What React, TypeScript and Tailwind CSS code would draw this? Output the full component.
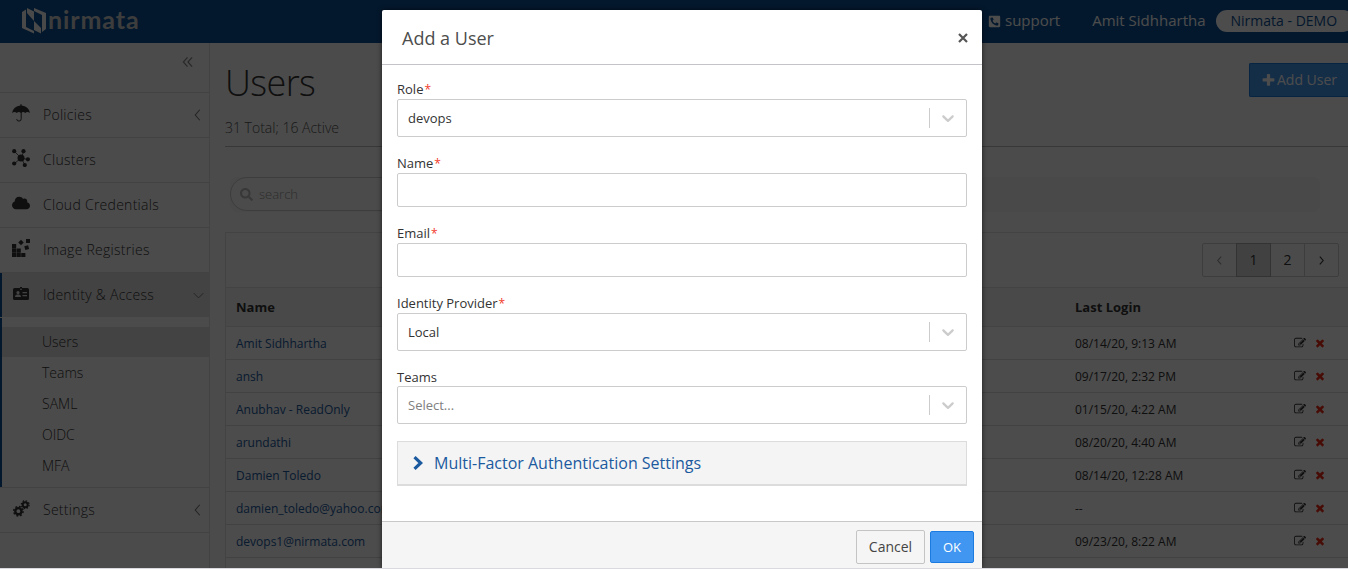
import React from "react";
import { FaPhoneSquare, FaCloud, FaSearch } from "react-icons/fa";

const EDIT =
  "M888 1184l116-116-152-152-116 116v56h96v96h56zm440-720q-16-16-33 1l-350 350q-17 17-1 33t33-1l350-350q17-17 1-33zm80 594v190q0 119-84.5 203.5t-203.5 84.5h-832q-119 0-203.5-84.5t-84.5-203.5v-832q0-119 84.5-203.5t203.5-84.5h832q63 0 117 25 15 7 18 23 3 17-9 29l-49 49q-14 14-32 8-23-6-45-6h-832q-66 0-113 47t-47 113v832q0 66 47 113t113 47h832q66 0 113-47t47-113v-126q0-13 9-22l64-64q15-15 35-7t20 29zm-96-738l288 288-672 672h-288v-288zm444 132l-92 92-288-288 92-92q28-28 68-28t68 28l152 152q28 28 28 68t-28 68z";
const TIMES =
  "M1490 1322q0 40-28 68l-136 136q-28 28-68 28t-68-28l-294-294-294 294q-28 28-68 28t-68-28l-136-136q-28-28-28-68t28-68l294-294-294-294q-28-28-28-68t28-68l136-136q28-28 68-28t68 28l294 294 294-294q28-28 68-28t68 28l136 136q28 28 28 68t-28 68l-294 294 294 294q28 28 28 68z";
const PLUS =
  "M1600 736v192q0 40-28 68t-68 28h-416v416q0 40-28 68t-68 28h-192q-40 0-68-28t-28-68v-416h-416q-40 0-68-28t-28-68v-192q0-40 28-68t68-28h416v-416q0-40 28-68t68-28h192q40 0 68 28t28 68v416h416q40 0 68 28t28 68z";

function Glyph({ d, className }: { d: string; className: string }) {
  return (
    <svg viewBox="0 0 1792 1792" className={className} fill="currentColor">
      <path d={d} />
    </svg>
  );
}

function LogoMark() {
  return (
    <svg viewBox="0 0 24 26" className="h-[26px] w-6 shrink-0" fill="#f4f4f4">
      <path d="M0 4 4 1.5V19L12 23V25.5L0 20Z" />
      <path d="M5 0 12 3.5V13L5 5Z" />
      <path d="M12 0 24 5V21L20 24V7L12 3Z" />
      <path d="M12 13 19 20V25.5L12 22Z" />
    </svg>
  );
}

function UmbrellaIcon() {
  return (
    <svg viewBox="0 0 18 18" className="size-[18px]" fill="currentColor">
      <path d="M9 0q.6 0 .6.600V1.500Q16.500 2 18 9q-2.700-2-4.800 0Q11.200 7 9 9 6.800 7 4.800 9 2.700 7 0 9 1.500 2 8.400 1.500V.6Q8.400 0 9 0Z" />
      <path d="M9.200 8v6.800q0 2.300-2.200 2.300t-2.300-2" fill="none" stroke="currentColor" />
    </svg>
  );
}

function ClusterIcon() {
  return (
    <svg viewBox="0 0 18 18" className="size-[18px]" fill="currentColor" stroke="currentColor">
      <path d="M2 2 9 9 12 2M2 15 9 9 13 16M9 9 16 10.500" strokeWidth="0.800" fill="none" />
      <g stroke="none">
        <circle cx="9" cy="9" r="3.500" />
        <circle cx="2.200" cy="2.200" r="2.100" />
        <circle cx="11.500" cy="2.200" r="2.100" />
        <circle cx="2.200" cy="14.500" r="2.100" />
        <circle cx="12.800" cy="16" r="2.100" />
        <circle cx="15.900" cy="10.300" r="2.100" />
      </g>
    </svg>
  );
}

function RegistryIcon() {
  return (
    <svg viewBox="0 0 18 18" className="size-[18px]" fill="currentColor">
      <path d="M0 5h4.200v4.200H0zM0 9.500h4.200v4.200H0zM0 14h4.200v4H0zM4.600 9.500h4.200v4.200H4.600zM4.600 14h4.200v4H4.600zM9.200 14h4.200v4H9.200zM14 0h4v4h-4zM9 .8l2.700 2.700L9 6.200 6.300 3.500zM12.300 7.300l3.800-1 1 3.700-3.800 1z" />
    </svg>
  );
}

function IdentityIcon() {
  return (
    <svg viewBox="0 0 16 13" className="h-[13px] w-4" fill="currentColor">
      <path
        fillRule="evenodd"
        d="M1.500 1H7V0h2v1h5.500Q16 1 16 2.500v9Q16 13 14.500 13h-13Q0 13 0 11.500v-9Q0 1 1.500 1ZM7 1.800v1h2v-1ZM5 4a1.600 1.600 0 1 0 .01 0ZM2 10h6q0-2.500-2-2.500H4Q2 7.500 2 10ZM9.500 5v1.200H14V5ZM9.500 8v1.200H14V8Z"
      />
    </svg>
  );
}

function GearsIcon() {
  return (
    <svg viewBox="0 0 17 17" className="size-[17px]" fill="none" stroke="currentColor">
      <circle cx="5.400" cy="11.200" r="3.100" strokeWidth="2.400" />
      <circle cx="5.400" cy="11.200" r="4.700" strokeWidth="1.500" strokeDasharray="1.900 1.790" />
      <circle cx="12.200" cy="4.700" r="2.500" strokeWidth="2" />
      <circle cx="12.200" cy="4.700" r="3.900" strokeWidth="1.300" strokeDasharray="1.500 1.560" />
    </svg>
  );
}

function Chevron({ dir, className }: { dir: "left" | "right" | "down"; className: string }) {
  const points = { left: "9,1 3,8 9,15", right: "3,1 9,8 3,15", down: "1,3 8,10 15,3" }[dir];
  return (
    <svg viewBox={dir === "down" ? "0 0 16 13" : "0 0 12 16"} className={className} fill="none" stroke="currentColor">
      <polyline points={points} />
    </svg>
  );
}

function NavItem({ icon, label, arrow }: { icon: React.ReactNode; label: string; arrow?: boolean }) {
  return (
    <div className="flex h-[45px] items-center border-b border-[#dcdcdc] pl-3 text-[#333]">
      <span className="-mt-1 flex w-[18px] justify-center">{icon}</span>
      <span className="ml-[13px] flex-1 tracking-[0.27px]">{label}</span>
      {arrow && <Chevron dir="left" className="mr-[7px] h-3 w-[9px] stroke-[1.4] text-[#777]" />}
    </div>
  );
}

const users = [
  ["Amit Sidhhartha", "08/14/20, 9:13 AM"],
  ["ansh", "09/17/20, 2:32 PM"],
  ["Anubhav - ReadOnly", "01/15/20, 4:22 AM"],
  ["arundathi", "08/20/20, 4:40 AM"],
  ["Damien Toledo", "08/14/20, 12:28 AM"],
  ["damien_toledo@yahoo.com", "--"],
  ["devops1@nirmata.com", "09/23/20, 8:22 AM"],
];

function Label({ text, required }: { text: string; required?: boolean }) {
  return (
    <div className="h-5 text-[13px] leading-5 text-[#333]">
      {text}
      {required && <span className="ml-px text-xs text-[#f23a2b]">*</span>}
    </div>
  );
}

function Select({ value, placeholder }: { value: string; placeholder?: boolean }) {
  return (
    <div className="flex h-[38px] items-center rounded-[2px] border border-[#ccc] pl-[10px] text-[13px]">
      <span className={placeholder ? "flex-1 text-[#808080]" : "flex-1 text-[#333]"}>{value}</span>
      <span className="h-5 w-px bg-[#ccc]" />
      <span className="flex w-9 justify-center">
        <svg viewBox="0 0 20 20" className="size-5 fill-[#ccc]">
          <path d="M4.516 7.548c0.436-0.446 1.043-0.481 1.576 0l3.908 3.747 3.908-3.747c0.533-0.481 1.141-0.446 1.574 0 0.436 0.445 0.408 1.197 0 1.615-0.406 0.418-4.695 4.502-4.695 4.502-0.217 0.223-0.502 0.335-0.787 0.335s-0.570-0.112-0.789-0.335c0 0-4.287-4.084-4.695-4.502s-0.436-1.170 0-1.615z" />
        </svg>
      </span>
    </div>
  );
}

function Input() {
  return <input className="block h-[34px] w-full rounded-[2px] border border-[#ccc] outline-none" />;
}

export default function App() {
  return (
    <div className="relative h-[570px] w-[1348px] overflow-hidden bg-[#fafafa] font-['Open_Sans',sans-serif] text-sm text-[#333]">
      <header className="flex h-[43px] items-center bg-[#0e5196] pb-px text-white">
        <div className="ml-[22px] flex w-[964px] shrink-0 items-center gap-[2px]">
          <LogoMark />
          <span className="-mt-[3px] font-[Lato] text-[25px] leading-none font-bold tracking-[0.9px] text-[#ccc]">nirmata</span>
        </div>
        <FaPhoneSquare className="ml-[2px] size-[13px] shrink-0 -scale-x-100" />
        <span className="ml-1 text-[15px]">support</span>
        <span className="ml-8 text-[15px] whitespace-nowrap">Amit Sidhhartha</span>
        <span className="ml-[10px] flex h-[22px] w-[138px] shrink-0 items-center rounded-full bg-white pl-[15px] text-sm text-[#0e5196]">Nirmata - DEMO</span>
      </header>

      <div className="flex h-[527px]">
        <nav className="w-[210px] shrink-0 border-r border-[#e2e2e2] font-light">
          <div className="flex h-[50px] justify-end border-b border-[#dcdcdc] pt-[13px] pr-[16px] text-[#888]">
            <svg viewBox="0 0 12 12" className="h-3 w-[11px]" fill="none" stroke="currentColor" strokeWidth="1.300">
              <path d="M6 1 1.500 6 6 11M11 1 6.500 6l4.500 5" />
            </svg>
          </div>
          <NavItem icon={<UmbrellaIcon />} label="Policies" arrow />
          <NavItem icon={<ClusterIcon />} label="Clusters" />
          <NavItem icon={<FaCloud className="size-[18px]" />} label="Cloud Credentials" />
          <NavItem icon={<RegistryIcon />} label="Image Registries" />
          <div className="border-b border-[#dcdcdc]">
            <div className="border-l-2 border-[#0e5196]">
              <div className="flex h-11 items-center bg-[#e0e0e0] pl-[11px]">
                <span className="-mt-1">
                  <IdentityIcon />
                </span>
                <span className="ml-[14px] flex-1 tracking-[0.27px]">Identity &amp; Access</span>
                <Chevron dir="down" className="mr-[5px] h-[9px] w-[11px] stroke-[1.4] text-[#777]" />
              </div>
            </div>
            <div className="mt-px border-l-2 border-[#0e5196] pt-[9px] pb-[6px]">
              {["Users", "Teams", "SAML", "OIDC", "MFA"].map((s, i) => (
                <div key={s} className={i === 0 ? "h-[30px] bg-[#e0e0e0] pl-10 leading-[30px]" : "h-[31px] pl-10 leading-[31px]"}>
                  {s}
                </div>
              ))}
            </div>
          </div>
          <NavItem icon={<GearsIcon />} label="Settings" arrow />
        </nav>

        <main className="w-[1138px] pl-[15px]">
          <div className="flex h-[104px] justify-between border-b border-[#bbb]">
            <div>
              <h1 className="mt-[15px] text-[36px] leading-[50px] font-light tracking-[-0.6px]">Users</h1>
              <p className="mt-[10px] text-sm leading-5 font-light text-[#555]">31 Total; 16 Active</p>
            </div>
            <button className="mt-5 flex h-[34px] w-[99px] items-center rounded-l-[2px] border border-r-0 border-[#1b7be0] bg-[#4499f0] pl-[11px] text-sm whitespace-nowrap text-white">
              <Glyph d={PLUS} className="mr-px size-[15px]" />
              Add User
            </button>
          </div>
          <div className="mt-[30px] ml-[5px] h-[35px] w-[1090px] rounded-[8px] bg-[#f3f3f3]">
            <div className="flex h-[34px] w-[400px] items-center rounded-full border border-[#ccc] bg-[#fafafa] pl-[9px] text-[13px] font-light text-[#999]">
              <FaSearch className="mr-[6px] size-[13px] text-[#bbb]" />
              search
            </div>
          </div>

          <section className="mt-5 w-[1140px] border-t border-l border-[#e0e0e0]">
            <div className="flex h-[54px] justify-end pt-[10px] pr-[26px]">
              <div className="flex h-[34px] w-[137px] rounded-[2px] border border-[#ccc]">
                <span className="flex w-[33px] items-center justify-center text-[#999]">
                  <Chevron dir="left" className="h-[9px] w-[7px] stroke-2" />
                </span>
                <span className="-my-px flex w-[35px] items-center justify-center border border-[#aaa] bg-[#dadada]">1</span>
                <span className="flex w-[33px] items-center justify-center">2</span>
                <span className="flex flex-1 items-center justify-center border-l border-[#ccc]">
                  <Chevron dir="right" className="h-[9px] w-[7px] stroke-2" />
                </span>
              </div>
            </div>
            <div className="flex h-10 items-center border-y border-[#e0e0e0] bg-[#f6f6f6] pl-[10px] text-[13px] font-bold">
              <span className="w-[839px]">Name</span>
              <span>Last Login</span>
            </div>
            {users.map(([name, time]) => (
              <div key={name} className="flex h-[33px] items-center border-b border-[#dcdcdc] bg-[#fdfdfd] pl-[10px] text-xs">
                <span className="w-[839px] pt-[2px] text-[#1b5a9f]">{name}</span>
                <span className="w-[219px] pt-[2px]">{time}</span>
                <Glyph d={EDIT} className="size-3" />
                <Glyph d={TIMES} className="ml-2 size-3 text-[#f02b18]" />
              </div>
            ))}
            <div className="h-[33px] bg-[#fdfdfd]" />
          </section>
        </main>
      </div>

      <div className="absolute inset-0 bg-black/70" />

      <div className="absolute top-[10px] left-[382px] flex h-[558px] w-[600px] flex-col rounded-t-[2px] bg-white shadow-[0_0_5px_rgba(0,0,0,0.6)]">
        <div className="flex h-[55px] items-center justify-between border-b border-[#c4c4c8] pt-[2px] pr-3 pl-5">
          <h2 className="text-lg text-[#4d4d4d]">Add a User</h2>
          <svg viewBox="0 0 14 14" className="size-[14px] text-[#555]" fill="none" stroke="currentColor" strokeWidth="2.200">
            <path d="M3 3 11 11M11 3 3 11" />
          </svg>
        </div>
        <div className="flex h-[456px] flex-col px-[15px] pt-[14px]">
          <Label text="Role" required />
          <Select value="devops" />
          <div className="mt-4">
            <Label text="Name" required />
            <Input />
          </div>
          <div className="mt-4">
            <Label text="Email" required />
            <Input />
          </div>
          <div className="mt-4">
            <Label text="Identity Provider" required />
            <Select value="Local" />
          </div>
          <div className="mt-4">
            <Label text="Teams" />
            <div className="-mt-px">
              <Select value="Select..." placeholder />
            </div>
          </div>
          <div className="mt-[17px] flex h-[45px] items-center border border-b-2 border-[#dcdcdc] bg-[#f4f4f4] pl-[15px] text-base text-[#1b5a9f]">
            <svg viewBox="0 0 10 14" className="mr-[11px] h-[14px] w-[10px]" fill="none" stroke="currentColor" strokeWidth="3.200">
              <path d="M1.500 1.200 7.700 7l-6.200 5.800" />
            </svg>
            Multi-Factor Authentication Settings
          </div>
        </div>
        <div className="flex flex-1 items-start justify-end gap-[5px] border-t border-[#c8c8c8] bg-[#f5f5f5] pt-2 pr-2">
          <button className="h-[34px] w-[69px] rounded-[2px] border border-[#c4c4c4] text-sm text-[#444]">Cancel</button>
          <button className="mt-px h-8 w-11 rounded-[2px] border border-[#1b7be0] bg-[#4096f0] text-[13px] text-white">OK</button>
        </div>
      </div>
      <div className="absolute inset-x-0 bottom-0 h-[2px] border-t border-[#d8dadf] bg-white" />
    </div>
  );
}
